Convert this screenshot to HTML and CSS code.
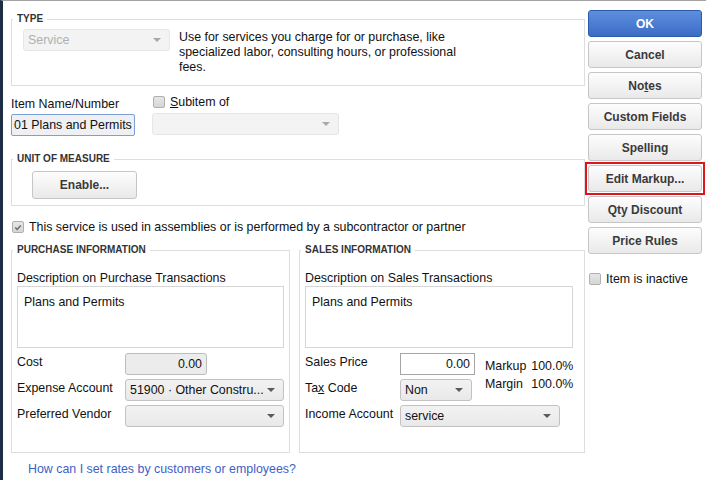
FILE: index.html
```html
<!DOCTYPE html>
<html lang="en">
<head>
  <meta charset="UTF-8">
  <title>Edit Item</title>
  <link rel="stylesheet" href="styles.css">
</head>
<body>
  <div class="window">
    <div class="main">
      <fieldset class="group type-group">
        <legend>TYPE</legend>
        <div class="type-row">
          <div class="select disabled type-select"><span>Service</span><i class="arrow"></i></div>
          <p class="type-desc">Use for services you charge for or purchase, like specialized labor, consulting hours, or professional fees.</p>
        </div>
      </fieldset>

      <div class="name-row">
        <div class="name-col">
          <label class="lbl">Item Name/Number</label>
          <div class="input name-input">01 Plans and Permits</div>
        </div>
        <div class="sub-col">
          <label class="check-line"><span class="check"></span><span><u>S</u>ubitem of</span></label>
          <div class="select disabled sub-select"><span></span><i class="arrow"></i></div>
        </div>
      </div>

      <fieldset class="group unit-group">
        <legend>UNIT OF MEASURE</legend>
        <button class="btn enable-btn">Enable...</button>
      </fieldset>

      <label class="check-line assembly"><span class="check checked"><svg viewBox="0 0 11 11" width="11" height="11"><path d="M2.5 5.6 L4.5 7.6 L8.6 3.2" fill="none" stroke="#6b6b6b" stroke-width="1.6"/></svg></span><span>This service is used in assemblies or is performed by a subcontractor or partner</span></label>

      <div class="info-row">
        <fieldset class="group info purchase">
          <legend>PURCHASE INFORMATION</legend>
          <div class="info-body">
            <div class="desc-label">Description on Purchase Transactions</div>
            <div class="textarea">Plans and Permits</div>
            <div class="form-grid">
              <span class="lbl cost-lbl">Cost</span>
              <div class="input num grey cost">0.00</div>
              <span class="lbl">Expense Account</span>
              <div class="select wide"><span>51900 · Other Constru...</span><i class="arrow"></i></div>
              <span class="lbl">Preferred Vendor</span>
              <div class="select wide"><span></span><i class="arrow"></i></div>
            </div>
          </div>
        </fieldset>

        <fieldset class="group info sales">
          <legend>SALES INFORMATION</legend>
          <div class="info-body">
            <div class="desc-label">Description on Sales Transactions</div>
            <div class="textarea">Plans and Permits</div>
            <div class="form-grid sales-grid">
              <span class="lbl">Sales Price</span>
              <div class="input num white price">0.00</div>
              <div class="markup">
                <span>Markup</span><span>100.0%</span>
                <span>Margin</span><span>100.0%</span>
              </div>
              <span class="lbl">Ta<u>x</u> Code</span>
              <div class="select tax"><span>Non</span><i class="arrow"></i></div>
              <span class="lbl">Income Account</span>
              <div class="select income"><span>service</span><i class="arrow"></i></div>
            </div>
          </div>
        </fieldset>
      </div>

      <a class="help-link" href="#">How can I set rates by customers or employees?</a>
    </div>

    <div class="side">
      <button class="btn side-btn ok">OK</button>
      <button class="btn side-btn">Cancel</button>
      <button class="btn side-btn">No<u>t</u>es</button>
      <button class="btn side-btn">Custom Fields</button>
      <button class="btn side-btn">Spellin<u>g</u></button>
      <div class="highlight"><button class="btn side-btn">Edit Markup...</button></div>
      <button class="btn side-btn">Qty Discount</button>
      <button class="btn side-btn">Price Rules</button>
      <label class="check-line inactive"><span class="check"></span><span>Item is inactive</span></label>
    </div>
  </div>
</body>
</html>
```

FILE: styles.css
```css
* {
  box-sizing: border-box;
}

html, body {
  margin: 0;
  height: 100%;
}

body {
  font-family: "Liberation Sans", Arial, sans-serif;
  font-size: 12.4px;
  color: #111;
  background: #fff;
  border-left: 3px solid #1c2d44;
  border-top: 1px solid #a3a3a3;
  overflow: hidden;
}

.window {
  display: flex;
  padding-left: 8px;
}

.main {
  width: 574px;
  display: flex;
  flex-direction: column;
}

.side {
  width: 114px;
  margin-left: 3px;
  padding-top: 9px;
  display: flex;
  flex-direction: column;
  gap: 4px;
}

/* group boxes */
.group {
  margin: 0;
  padding: 0;
  border: 1px solid #dedede;
  min-width: 0;
}

.group legend {
  margin-left: 1px;
  padding: 0 4px;
  font-size: 10px;
  font-weight: bold;
  color: #333;
  line-height: 12px;
}

.type-group {
  margin-top: 12px;
  height: 73px;
}

.type-row {
  display: flex;
  padding: 5px 0 0 11px;
}

.type-desc {
  margin: 0 0 0 9px;
  width: 295px;
  line-height: 15px;
}

/* selects and inputs */
.select {
  height: 22px;
  border: 1px solid #c2c2c2;
  border-radius: 3px;
  background: linear-gradient(#f2f2f2, #e9e9e9);
  display: flex;
  align-items: center;
  padding: 0 8px 0 4px;
}

.select span {
  flex: 1;
  white-space: nowrap;
  overflow: hidden;
}

.arrow {
  width: 0;
  height: 0;
  border-left: 4px solid transparent;
  border-right: 4px solid transparent;
  border-top: 4px solid #5a5a5a;
}

.select.disabled {
  border-color: #e6e6e6;
  background: #f3f3f3;
  color: #b0b0b0;
}

.select.disabled .arrow {
  border-top-color: #a8a8a8;
}

.type-select {
  width: 147px;
  margin-top: -1px;
}

.input {
  height: 22px;
  display: flex;
  align-items: center;
  padding: 0 4px;
}

.num {
  justify-content: flex-end;
}

.grey {
  border: 1px solid #bdbdbd;
  border-radius: 3px;
  background: #ececec;
}

.white {
  border: 1px solid #a6a6a6;
  background: #fff;
}

/* name row */
.name-row {
  display: flex;
  margin-top: 9px;
}

.name-col {
  width: 141px;
}

.lbl {
  display: block;
  white-space: nowrap;
}

.name-col .lbl {
  margin-top: 2px;
  margin-bottom: 3px;
}

.name-input {
  width: 124px;
  border: 1px solid #7d9fd6;
  border-radius: 2px;
  background: #eef0f3;
  padding: 0 2px;
  white-space: nowrap;
  overflow: hidden;
}

.check-line {
  display: flex;
  align-items: center;
  gap: 5px;
}

.check {
  width: 12px;
  height: 12px;
  border: 1px solid #b0b0b0;
  border-radius: 2px;
  background: linear-gradient(#e6e6e6, #d6d6d6);
  display: flex;
  flex-shrink: 0;
}

.sub-col .check-line {
  margin-left: 1px;
  height: 14px;
}

.sub-select {
  width: 187px;
  margin-top: 4px;
}

/* unit of measure */
.unit-group {
  margin-top: 17px;
  height: 53px;
}

.btn {
  font-family: "Liberation Sans", Arial, sans-serif;
  font-weight: bold;
  font-size: 12px;
  color: #3a3a3a;
  border: 1px solid #c6c6c6;
  border-radius: 3px;
  background: linear-gradient(#fdfdfd, #e9e9e9);
  cursor: pointer;
  padding: 0;
}

.enable-btn {
  width: 105px;
  height: 28px;
  margin: 6px 0 0 20px;
}

.assembly {
  margin-top: 14px;
  margin-left: 1px;
}

/* info columns */
.info-row {
  display: flex;
  gap: 9px;
  margin-top: 10px;
}

.info {
  height: 209px;
}

.info-body {
  padding: 15px 5px 0 5px;
}

.purchase {
  width: 279px;
}

.sales {
  width: 286px;
}

.sales .info-body {
  padding-right: 11px;
}

.desc-label {
  line-height: 14px;
}

.textarea {
  height: 62px;
  border: 1px solid #d6d6d6;
  margin-top: 1px;
  padding: 8px 6px;
}

.form-grid {
  display: grid;
  grid-template-columns: 108px 1fr;
  row-gap: 4px;
  margin-top: 5px;
  align-items: center;
}

.sales-grid {
  grid-template-columns: 95px 85px 1fr;
}

.form-grid .lbl {
  padding-bottom: 4px;
}

.cost {
  width: 82px;
}

.price {
  width: 75px;
}

.markup {
  grid-row: 1 / span 2;
  grid-column: 3;
  align-self: start;
  display: grid;
  grid-template-columns: auto auto;
  justify-content: start;
  column-gap: 5px;
  margin-top: 4px;
  line-height: 18px;
}

.tax {
  width: 72px;
}

.income {
  grid-column: 2 / span 2;
  width: 160px;
}

.help-link {
  margin-top: 9px;
  margin-left: 17px;
  color: #3d5fc6;
  text-decoration: none;
}

/* side buttons */
.side-btn {
  height: 27px;
  width: 114px;
}

.ok {
  color: #fff;
  border-color: #2d5aa8;
  background: linear-gradient(#5d8fdf, #3c6cc5);
}

.highlight {
  border: 2px solid #e0151b;
  margin: -3px -3px;
  padding: 1px;
}

.inactive {
  margin-top: 14px;
  margin-left: 1px;
}
```
